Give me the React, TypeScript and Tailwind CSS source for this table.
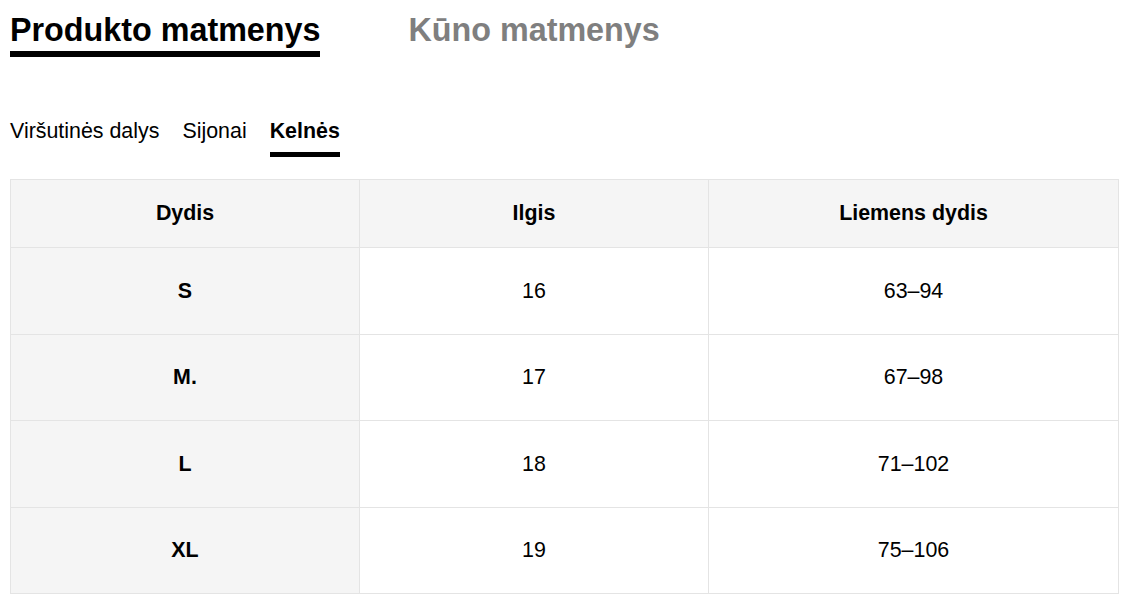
const rows = [
  { size: 'S', length: '16', waist: '63–94' },
  { size: 'M.', length: '17', waist: '67–98' },
  { size: 'L', length: '18', waist: '71–102' },
  { size: 'XL', length: '19', waist: '75–106' },
]

export default function App() {
  return (
    <main className="min-h-screen w-full bg-white px-[10px] text-black font-['Liberation_Sans',Arial,sans-serif]">
      <div className="flex items-start gap-[88px] pt-[11px]">
        <div className="flex flex-col">
          <span className="text-[32.3px] font-bold leading-[38px]">Produkto matmenys</span>
          <div className="mt-[2px] h-[6px] bg-black" />
        </div>
        <span className="text-[32.3px] font-bold leading-[38px] text-[#7f7f7f]">Kūno matmenys</span>
      </div>

      <div className="mt-[61px] flex items-start gap-[23px] text-[21.4px] leading-[26px]">
        <span>Viršutinės dalys</span>
        <span>Sijonai</span>
        <div className="flex flex-col">
          <span className="font-bold">Kelnės</span>
          <div className="mt-[8px] h-[5px] bg-black" />
        </div>
      </div>

      <table className="mt-[22px] w-[1109px] border-collapse text-[21.4px] text-center">
        <thead>
          <tr className="h-[68px] bg-[#f5f5f5]">
            <th className="w-[349px] border border-[#e4e4e4] font-bold">Dydis</th>
            <th className="w-[349px] border border-[#e4e4e4] font-bold">Ilgis</th>
            <th className="border border-[#e4e4e4] font-bold">Liemens dydis</th>
          </tr>
        </thead>
        <tbody>
          {rows.map((r) => (
            <tr key={r.size} className="h-[86.5px]">
              <td className="border border-[#e4e4e4] bg-[#f5f5f5] font-bold">{r.size}</td>
              <td className="border border-[#e4e4e4]">{r.length}</td>
              <td className="border border-[#e4e4e4]">{r.waist}</td>
            </tr>
          ))}
        </tbody>
      </table>
    </main>
  )
}
